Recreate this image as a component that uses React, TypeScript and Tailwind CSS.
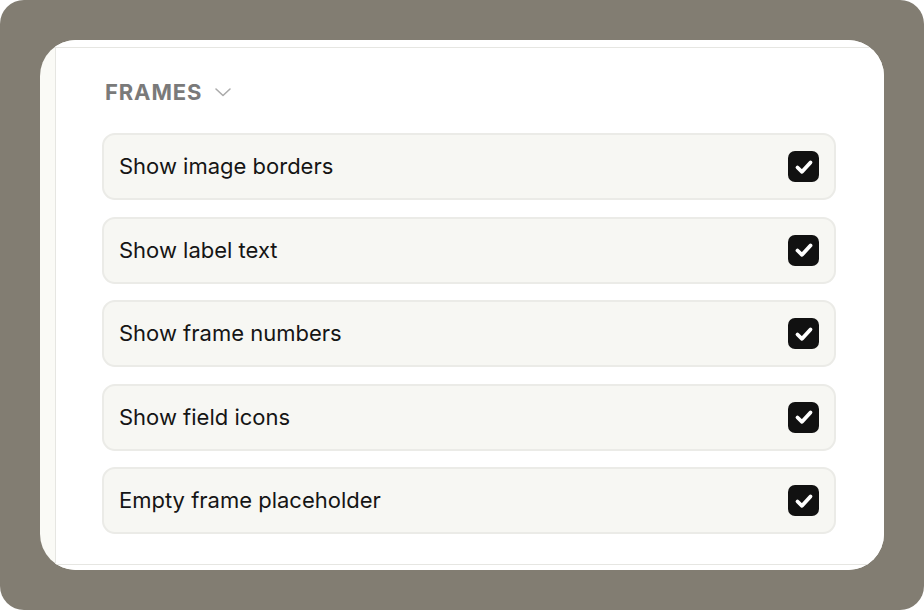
import React from "react";

const items = [
  "Show image borders",
  "Show label text",
  "Show frame numbers",
  "Show field icons",
  "Empty frame placeholder",
];

function Check() {
  return (
    <div className="w-[31px] h-[31px] rounded-[7px] bg-[#111111] flex items-center justify-center">
      <svg width="22" height="22" viewBox="0 0 22 22" fill="none">
        <path d="M4.5 11.5 L9 15.8 L17.5 6.5" stroke="white" strokeWidth="3.8" strokeLinecap="round" strokeLinejoin="round" />
      </svg>
    </div>
  );
}

export default function App() {
  return (
    <div className="w-[924px] h-[610px] bg-white">
      <div className="w-full h-full bg-[#827d72] rounded-[24px] p-[40px]" style={{ fontFamily: "Inter, 'Noto Sans', sans-serif" }}>
        <div className="w-full h-full rounded-[36px] overflow-hidden bg-[#fafaf6] flex flex-col">
          <div className="h-[7px] bg-white ml-[15px] shrink-0" />
          <div className="ml-[15px] flex-1 bg-white border-l border-t border-b border-[#e6e6e2] pl-[46px] pr-[48px] pt-[28px]">
            <div className="flex items-center gap-[12px] pl-[3px] h-[32px]">
              <span className="text-[22px] font-bold tracking-[0.04em] text-[#7a7a7a] leading-none">FRAMES</span>
              <svg width="18" height="12" viewBox="0 0 18 12" fill="none">
                <path d="M2 3 L9 9.5 L16 3" stroke="#ababab" strokeWidth="1.6" strokeLinecap="round" strokeLinejoin="round" />
              </svg>
            </div>
            <div className="flex flex-col gap-[16.5px] mt-[25px]">
              {items.map((t) => (
                <div key={t} className="h-[67px] rounded-[13px] bg-[#f7f7f3] border-2 border-[#ebebe7] flex items-center justify-between pl-[15px] pr-[15px]">
                  <span className="text-[22px] text-[#151515]">{t}</span>
                  <Check />
                </div>
              ))}
            </div>
          </div>
          <div className="h-[5px] bg-white ml-[15px] shrink-0" />
        </div>
      </div>
    </div>
  );
}
